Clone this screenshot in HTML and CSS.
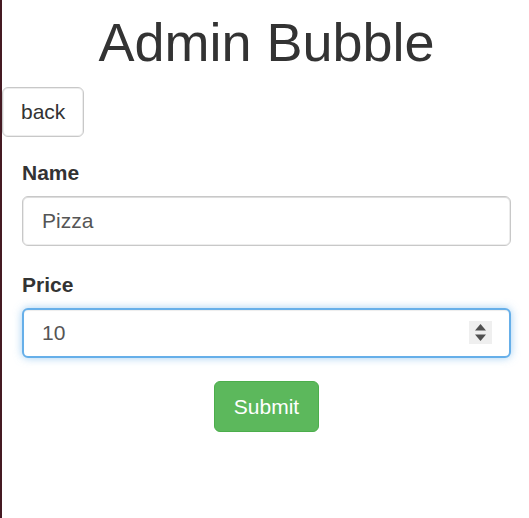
FILE: index.html
```html
<!DOCTYPE html>
<html>
<head>
<meta charset="utf-8">
<link rel="stylesheet" href="styles.css">
</head>
<body>
<div class="page">
  <h1 class="title">Admin Bubble</h1>
  <button class="btn btn-back" type="button">back</button>
  <form class="form">
    <div class="group">
      <label class="label">Name</label>
      <input class="field" type="text" value="Pizza">
    </div>
    <div class="group">
      <label class="label">Price</label>
      <div class="field-wrap">
        <input class="field field-focus" type="text" value="10">
        <span class="spinner">
          <svg width="23" height="23" viewBox="0 0 23 23">
            <rect width="23" height="23" fill="#efefef"/>
            <polygon points="11.5,3 17,9.5 6,9.5" fill="#505050"/>
            <polygon points="6,13.5 17,13.5 11.5,20" fill="#505050"/>
          </svg>
        </span>
      </div>
    </div>
    <div class="actions">
      <button class="btn btn-submit" type="button">Submit</button>
    </div>
  </form>
</div>
</body>
</html>
```
FILE: styles.css
```css
html, body {
  margin: 0;
  padding: 0;
  background: #fff;
}
body {
  font-family: "Liberation Sans", Arial, sans-serif;
  color: #333;
}
.page {
  border-left: 2px solid #451a23;
  min-height: 100vh;
  box-sizing: border-box;
  padding-top: 13px;
}
.title {
  margin: 0 0 15px;
  padding: 0 18px 0 20px;
  font-size: 54px;
  line-height: 59px;
  font-weight: 400;
  text-align: center;
  color: #333;
}
.btn {
  font-family: "Liberation Sans", Arial, sans-serif;
  font-size: 21px;
  line-height: 27px;
  border-radius: 6px;
  cursor: pointer;
  display: inline-block;
  vertical-align: top;
}
.btn-back {
  margin: 0;
  padding: 10px 18px 11px;
  background: #fff;
  border: 1px solid #c8c8c8;
  color: #333;
  box-shadow: inset 0 0 0 1px rgba(204,204,204,.35);
}
.form {
  padding: 0 18px 0 20px;
  margin-top: 21px;
}
.group {
  margin-bottom: 24px;
}
.label {
  display: block;
  font-size: 21px;
  line-height: 30px;
  font-weight: 700;
  color: #333;
  margin-bottom: 8px;
}
.field-wrap {
  position: relative;
}
.field {
  display: block;
  width: 100%;
  box-sizing: border-box;
  height: 50px;
  padding: 0 19px;
  font-family: "Liberation Sans", Arial, sans-serif;
  font-size: 21px;
  color: #555;
  background: #fff;
  border: 1px solid #c8c8c8;
  border-radius: 6px;
  box-shadow: inset 0 1px 1px rgba(0,0,0,.075), inset 0 0 0 1px rgba(204,204,204,.35);
  outline: none;
}
.field-focus {
  border: 2px solid #66afe9;
  padding: 0 18px;
  box-shadow: inset 0 1px 1px rgba(0,0,0,.075), 0 0 8px rgba(102,175,233,.6);
}
.spinner {
  position: absolute;
  right: 19px;
  top: 13px;
  width: 23px;
  height: 23px;
  display: block;
}
.spinner svg {
  display: block;
}
.actions {
  text-align: center;
  margin-top: -1px;
}
.btn-submit {
  padding: 11px 19px;
  background: #5cb85c;
  border: 1px solid #4cae4c;
  color: #fff;
}
```
